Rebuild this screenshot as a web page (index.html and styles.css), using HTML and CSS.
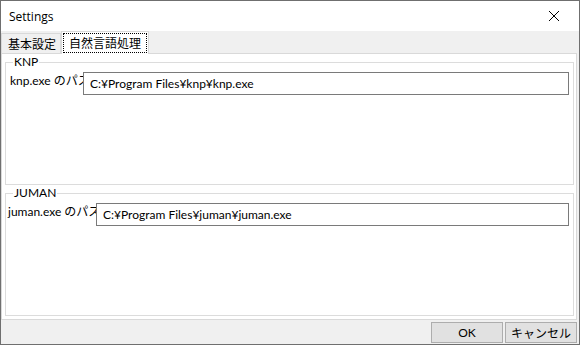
FILE: index.html
```html
<!DOCTYPE html>
<html lang="ja">
<head>
    <meta charset="UTF-8">
    <title>Settings</title>
    <link rel="stylesheet" href="styles.css">
</head>
<body>
    <div class="window">
        <div class="titlebar">
            <span class="title">Settings</span>
            <span class="close">
                <svg width="12" height="12" viewBox="0 0 12 12"><path d="M1 1 L11 11 M11 1 L1 11" stroke="#000" stroke-width="1" fill="none"/></svg>
            </span>
        </div>

        <div class="tabs">
            <div class="tab">基本設定</div>
            <div class="tab active"><span class="focus">自然言語処理</span></div>
        </div>

        <div class="panel">
            <fieldset class="group">
                <legend>KNP</legend>
                <div class="row">
                    <label class="path-label knp">knp.exe のパス</label>
                    <input class="path" type="text" value="C:¥Program Files¥knp¥knp.exe">
                </div>
            </fieldset>
            <fieldset class="group">
                <legend>JUMAN</legend>
                <div class="row">
                    <label class="path-label juman">juman.exe のパス</label>
                    <input class="path" type="text" value="C:¥Program Files¥juman¥juman.exe">
                </div>
            </fieldset>
        </div>

        <div class="footer">
            <button class="btn ok">OK</button>
            <button class="btn cancel">キャンセル</button>
        </div>
    </div>
</body>
</html>
```

FILE: styles.css
```css
* {
    margin: 0;
    padding: 0;
    box-sizing: border-box;
}
body {
    font-family: Lato, "Noto Sans CJK JP", sans-serif;
    font-size: 12px;
    color: #000;
    background-color: #fff;
}
.window {
    width: 580px;
    height: 345px;
    border: 1px solid #6f6f6f;
    background-color: #f0f0f0;
    display: flex;
    flex-direction: column;
}

/* title bar */
.titlebar {
    height: 30px;
    background-color: #fff;
    display: flex;
    align-items: center;
    justify-content: space-between;
    padding-left: 8px;
}
.title {
    font-family: "Open Sans", sans-serif;
    font-size: 12px;
}
.close {
    width: 46px;
    height: 30px;
    display: flex;
    align-items: center;
    justify-content: center;
    margin-right: 2px;
}

/* tabs */
.tabs {
    height: 22px;
    display: flex;
    align-items: flex-end;
    position: relative;
    z-index: 1;
}
.tab {
    height: 20px;
    padding: 0 4px 0 6px;
    border: 1px solid #d9d9d9;
    border-bottom: none;
    background-color: #f0f0f0;
    display: flex;
    align-items: center;
    font-family: "Noto Sans CJK JP", sans-serif;
    line-height: 1;
}
.tab.active {
    height: 23px;
    margin-bottom: -1px;
    padding: 1px;
    background-color: #fff;
    align-items: stretch;
}
.focus {
    border: 1px dotted #000;
    padding: 0 5px;
    display: flex;
    align-items: center;
}

/* tab page */
.panel {
    height: 267px;
    margin-right: 2px;
    border: 1px solid #d9d9d9;
    background-color: #fff;
    padding: 1px 2px 3px 3px;
    display: flex;
    flex-direction: column;
    gap: 1px;
}
.group {
    height: 130px;
    border: 1px solid #dcdcdc;
    min-width: 0;
}
.group legend {
    margin-left: 7px;
    padding: 0 1px;
    line-height: 14px;
}
.row {
    display: flex;
    align-items: flex-start;
    margin-top: 3px;
}
.path-label {
    flex-shrink: 0;
    white-space: nowrap;
    padding-top: 2px;
    line-height: 14px;
}
.path-label.knp {
    margin-left: 4px;
    width: 73px;
}
.path-label.juman {
    margin-left: 2px;
    width: 88px;
}
/* the text box is drawn over the end of its label, as in the dialog */
.path {
    flex: 1;
    position: relative;
    height: 23px;
    margin-right: 4px;
    border: 1px solid #7a7a7a;
    padding: 0 6px;
    background-color: #fff;
    font-family: Lato, "Noto Sans CJK JP", sans-serif;
    font-size: 12px;
    color: #000;
    outline: none;
}

/* bottom buttons */
.footer {
    flex: 1;
    display: flex;
    justify-content: flex-end;
    align-items: flex-start;
    padding: 2px 2px 0 0;
    gap: 2px;
}
.btn {
    height: 21px;
    border: 1px solid #adadad;
    background-color: #e1e1e1;
    font-family: Lato, "Noto Sans CJK JP", sans-serif;
    font-size: 12px;
    color: #000;
}
.btn.ok {
    width: 72px;
}
.btn.cancel {
    width: 72px;
}
```
